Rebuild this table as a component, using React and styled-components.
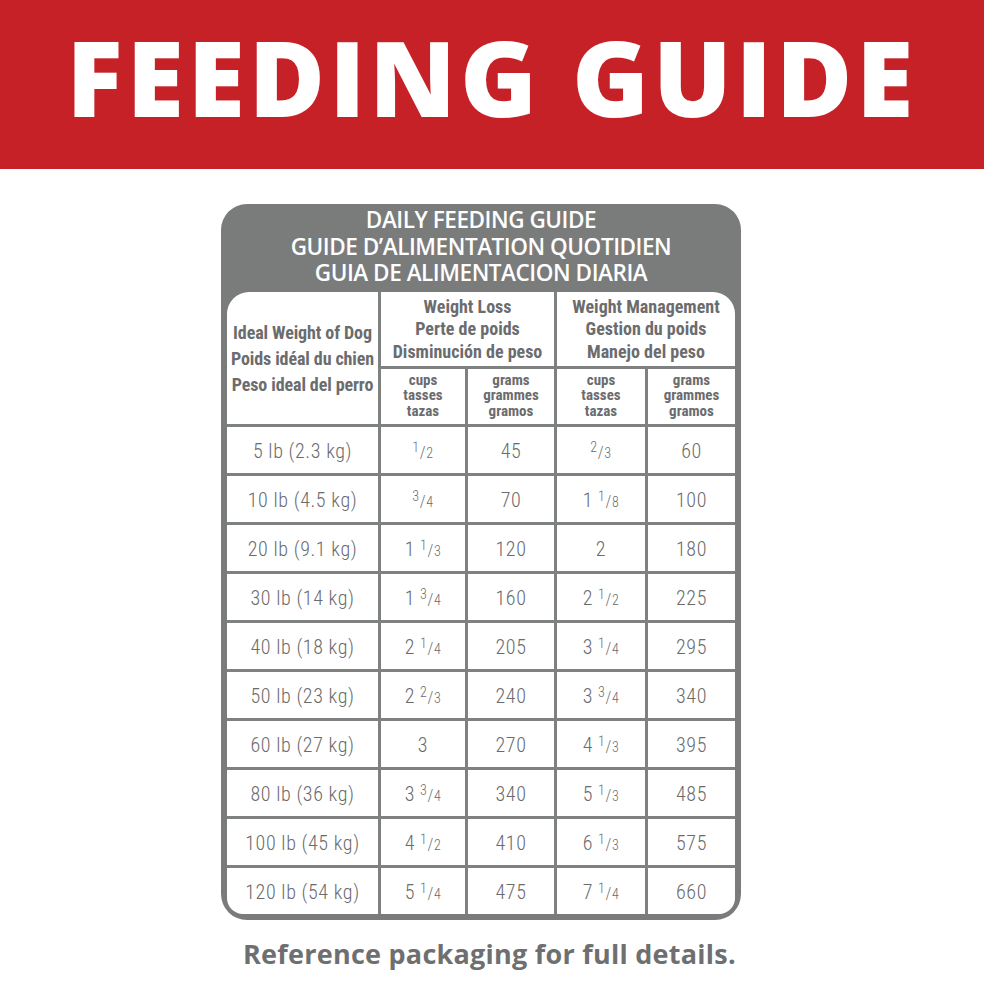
import React from 'react';
import styled, { createGlobalStyle } from 'styled-components';

// --- STYLED COMPONENTS ---

const GlobalStyle = createGlobalStyle`
  html, body {
    margin: 0;
    padding: 0;
    background: #ffffff;
  }
`;

const Banner = styled.header`
  height: 169px;
  background: #c72128;
  display: flex;
  align-items: center;
  justify-content: center;
`;

const BannerTitle = styled.h1`
  margin: 0 0 16px;
  color: #ffffff;
  font-family: "Open Sans", "Liberation Sans", sans-serif;
  font-weight: 800;
  font-size: 104px;
  line-height: 1;
  letter-spacing: 4px;
`;

const Main = styled.main`
  display: flex;
  flex-direction: column;
  align-items: flex-start;
  padding: 35px 0 0 221px;
`;

const Card = styled.section`
  width: 520px;
  box-sizing: border-box;
  background: #7a7c7c;
  border-radius: 26px;
  padding: 0 6px 6px;
`;

const CardTitle = styled.h2`
  margin: 0;
  padding: 3px 0 5px;
  color: #ffffff;
  text-align: center;
  font-family: "Open Sans", "Liberation Sans", sans-serif;
  font-weight: 600;
  font-size: 22.5px;
  line-height: 26.5px;
  letter-spacing: -0.45px;
`;

const Grid = styled.div`
  display: grid;
  grid-template-columns: 151px 84px 86px 88px 87px;
  grid-template-rows: 74px 55px repeat(10, 46px);
  gap: 3px;
  background: #7f8181;
  border-radius: 22px 22px 16px 16px;
  overflow: hidden;
`;

const Cell = styled.div`
  background: #ffffff;
  color: #6b6c6e;
  display: flex;
  align-items: center;
  justify-content: center;
  text-align: center;
  white-space: nowrap;
  font-family: "Roboto Condensed", "Liberation Sans Narrow", "DejaVu Sans Condensed", Roboto, sans-serif;
  grid-row: ${({ $rows }) => ($rows ? `span ${$rows}` : 'auto')};
  grid-column: ${({ $cols }) => ($cols ? `span ${$cols}` : 'auto')};
`;

const WeightHead = styled(Cell)`
  font-weight: 700;
  font-size: 18px;
  line-height: 26px;
  letter-spacing: -0.1px;
  padding-top: 3px;
`;

const GroupHead = styled(Cell)`
  font-weight: 700;
  font-size: 18px;
  line-height: 22.5px;
  padding-top: 2px;
`;

const UnitHead = styled(Cell)`
  font-weight: 700;
  font-size: 15px;
  line-height: 15.5px;
`;

const DataCell = styled(Cell)`
  font-weight: 300;
  font-size: 20px;
  letter-spacing: 0.6px;
  color: #6a6b6d;
  padding-top: 2px;
`;

const Num = styled.span`
  font-size: 0.7em;
  position: relative;
  top: -0.36em;
`;

const Slash = styled.span`
  font-size: 0.82em;
`;

const Den = styled.span`
  font-size: 0.7em;
`;

const Whole = styled.span`
  margin-right: 0.25em;
`;

const Footer = styled.p`
  margin: 18px 0 0 22px;
  color: #6e6f71;
  font-family: "Open Sans", "Liberation Sans", sans-serif;
  font-weight: 700;
  font-size: 27px;
  line-height: 32px;
  letter-spacing: 0.25px;
`;

// --- DATA ---

const rows = [
  ['5 lb (2.3 kg)', '1/2', '45', '2/3', '60'],
  ['10 lb (4.5 kg)', '3/4', '70', '1 1/8', '100'],
  ['20 lb (9.1 kg)', '1 1/3', '120', '2', '180'],
  ['30 lb (14 kg)', '1 3/4', '160', '2 1/2', '225'],
  ['40 lb (18 kg)', '2 1/4', '205', '3 1/4', '295'],
  ['50 lb (23 kg)', '2 2/3', '240', '3 3/4', '340'],
  ['60 lb (27 kg)', '3', '270', '4 1/3', '395'],
  ['80 lb (36 kg)', '3 3/4', '340', '5 1/3', '485'],
  ['100 lb (45 kg)', '4 1/2', '410', '6 1/3', '575'],
  ['120 lb (54 kg)', '5 1/4', '475', '7 1/4', '660'],
];

// "1 1/3" -> 1 + small fraction
const Amount = ({ value }) => {
  const parts = value.split(' ');
  const frac = parts.find((p) => p.includes('/'));
  const whole = parts.find((p) => !p.includes('/'));
  if (!frac) return <span>{value}</span>;
  const [n, d] = frac.split('/');
  return (
    <span>
      {whole && <Whole>{whole}</Whole>}
      <Num>{n}</Num>
      <Slash>/</Slash>
      <Den>{d}</Den>
    </span>
  );
};

const Units = ({ kind }) =>
  kind === 'cups' ? (
    <UnitHead>cups<br />tasses<br />tazas</UnitHead>
  ) : (
    <UnitHead>grams<br />grammes<br />gramos</UnitHead>
  );

// --- REACT COMPONENT ---

const App = () => {
  return (
    <>
      <GlobalStyle />
      <Banner>
        <BannerTitle>FEEDING GUIDE</BannerTitle>
      </Banner>

      <Main>
        <Card>
          <CardTitle>
            DAILY FEEDING GUIDE<br />
            GUIDE D’ALIMENTATION QUOTIDIEN<br />
            GUIA DE ALIMENTACION DIARIA
          </CardTitle>

          <Grid>
            <WeightHead $rows={2}>
              <span>
                Ideal Weight of Dog<br />
                Poids idéal du chien<br />
                Peso ideal del perro
              </span>
            </WeightHead>
            <GroupHead $cols={2}>
              <span>
                Weight Loss<br />
                Perte de poids<br />
                Disminución de peso
              </span>
            </GroupHead>
            <GroupHead $cols={2}>
              <span>
                Weight Management<br />
                Gestion du poids<br />
                Manejo del peso
              </span>
            </GroupHead>
            <Units kind="cups" />
            <Units kind="grams" />
            <Units kind="cups" />
            <Units kind="grams" />

            {rows.map((row) =>
              row.map((val, i) => (
                <DataCell key={row[0] + i}>
                  {i === 1 || i === 3 ? <Amount value={val} /> : val}
                </DataCell>
              ))
            )}
          </Grid>
        </Card>

        <Footer>Reference packaging for full details.</Footer>
      </Main>
    </>
  );
};

export default App;
